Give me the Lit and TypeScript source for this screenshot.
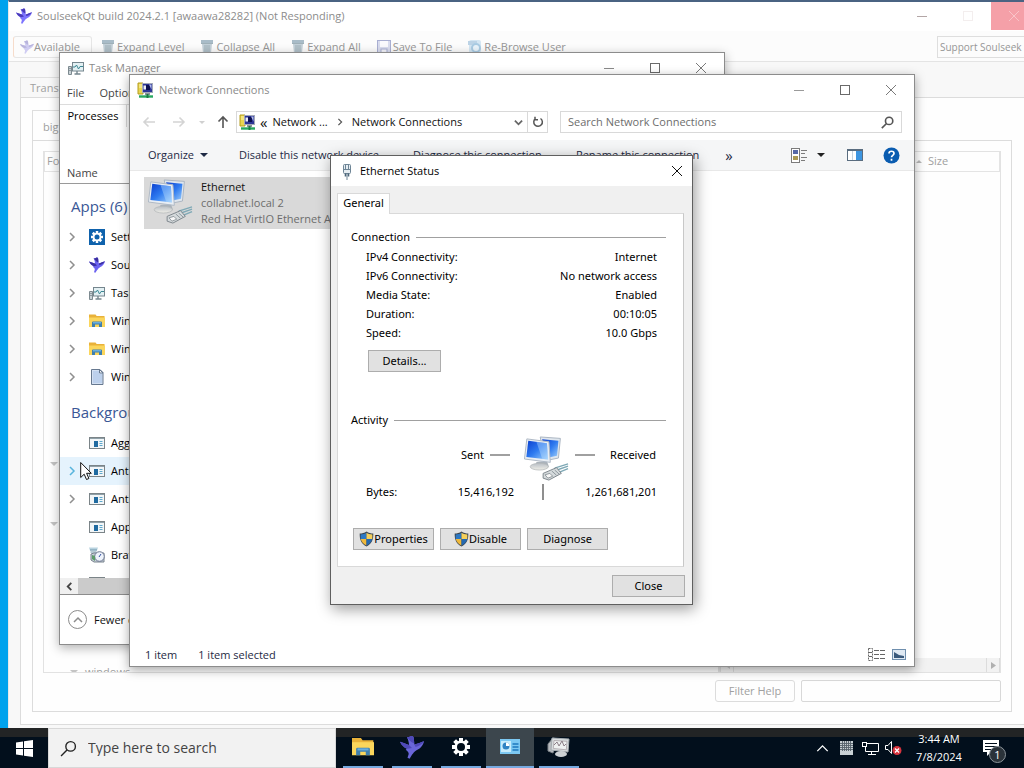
import { LitElement, html, svg, css, nothing } from "lit";
import { customElement } from "lit/decorators.js";

/* ---------- shared styles ---------- */

const base = css`
  :host {
    display: block;
    box-sizing: border-box;
    font-family: "Open Sans", "Noto Sans", sans-serif;
    font-size: 11px;
    line-height: 16px;
    color: #1a1a1a;
  }
  * { box-sizing: border-box; }
  button, input {
    font: inherit;
    color: inherit;
    margin: 0;
    padding: 0;
    border: 0;
    border-radius: 0;
    background: none;
    outline: none;
  }
  button { display: flex; align-items: center; justify-content: center; white-space: nowrap; }
  svg { display: block; flex: none; }
  ul, dl, dd, h2, p { margin: 0; padding: 0; font: inherit; }
  li { list-style: none; }
`;

const frame = css`
  .titlebar { display: flex; align-items: center; height: 30px; flex: none; background: #fff; }
  .titlebar .name { flex: 1; margin-left: 5px; white-space: nowrap; }
  .caption { width: 46px; height: 30px; }
`;

/* ---------- icons ---------- */

const caption = (kind: "min" | "max" | "close", color: string) => html`
  <svg width="12" height="12" viewBox="0 0 12 12" fill="none" stroke=${color} stroke-width="1">
    ${kind === "min" ? svg`<path d="M1 6.5h10"/>` : nothing}
    ${kind === "max" ? svg`<rect x="1.5" y="1.5" width="9" height="9"/>` : nothing}
    ${kind === "close" ? svg`<path d="M1 1l10 10M11 1L1 11"/>` : nothing}
  </svg>`;

const bird = (size: number, a = "#4a3bb8", b = "#7d74ff") => html`
  <svg width=${size} height=${size} viewBox="0 0 16 16">
    <path d="M0 4.500C2 5 4 6 6 6.600C6 5.400 5.600 4 5.200 2.600L4.600 1.600L6.400 1.200C7.400 0.200 9 0.500 9.200 2L9.600 6.400C12 6 14 4.600 16 4.200C15.600 6.600 13.600 9.200 11 10.200C9.600 11 9 12 8 13.200L6.400 15.800L5 15.200L5.800 12.600C5.800 11.400 5 10.800 3.800 9.800L4.600 9.200C2.600 8.400 1 6.800 0 4.500Z" fill=${b}/>
    <path d="M4.600 1.600L6.400 1.200C7.400 0.200 9 0.500 9.200 2L9.500 5.600L7.500 4.600ZM0 4.500C2 5 4 6 6 6.600L8 8.600L5 9.200C3 8.400 1 6.800 0 4.500ZM9.600 6.400C12 6 14 4.600 16 4.200C15.400 5.600 13 7.400 10.400 8Z" fill=${a}/>
  </svg>`;

const bin = html`
  <svg width="14" height="15" viewBox="0 0 14 15">
    <path d="M1 1h12v3H1z" fill="#a9bcc8"/><path d="M2 5h10l-1 9H3z" fill="#c3d0d8"/>
    <path d="M1 4.500h12M5 6v7M7 6v7M9 6v7" stroke="#9fb0b8"/>
  </svg>`;

const floppy = html`
  <svg width="14" height="14" viewBox="0 0 14 14">
    <rect x=".5" y=".5" width="13" height="13" fill="#d9dcee" stroke="#a9afd2"/>
    <rect x="3" y="1" width="8" height="6" fill="#fafafd"/><rect x="4" y="9" width="6" height="4" fill="#f4f4fa" stroke="#a9afd2"/>
  </svg>`;

const refreshBlue = html`
  <svg width="14" height="14" viewBox="0 0 14 14">
    <rect width="12" height="13" x="1" rx="2" fill="#d4e6f3"/><path d="M0 1h9v4H0z" fill="#bcd3e6"/>
    <circle cx="8" cy="8" r="4" fill="#eaf4fb" stroke="#a9cbe3" stroke-width="2"/>
  </svg>`;

const monitorGraph = (size = 16) => html`
  <svg width=${size} height=${size} viewBox="0 0 16 16">
    <path d="M.5 6.500h3v8h-3z" fill="#c9d2d6" stroke="#7d8a90"/><path d="M1.500 8.500h1M1.500 10.500h1" stroke="#54636a"/>
    <rect x="4.500" y="2.500" width="11" height="8.500" fill="#e3f0f3" stroke="#75868e"/>
    <path d="M5 7h2l1.500-2 2 4 1.500-2.500h3" fill="none" stroke="#3d8894"/>
    <path d="M9 11v2.500M6.500 14h6" stroke="#75868e" stroke-width="1.400"/>
  </svg>`;

const networkFolder = html`
  <svg width="17" height="17" viewBox="0 0 17 17">
    <path d="M1 1h5v11H1z" fill="#e9d650" stroke="#b59c1e"/><path d="M2 3h3M2 5h3" stroke="#fff6b0"/>
    <rect x="5.500" y="1.500" width="10" height="9" fill="#2c3596" stroke="#a3a9b8"/>
    <path d="M9 3h4v5H9z" fill="#0b1050"/><path d="M12 2.500h2.500v5z" fill="#b5beee"/>
    <path d="M6.500 3.500h2.500v4h-2.500z" fill="#e8ecf8"/>
    <path d="M8 11h5v2H8z" fill="#8d959c"/><path d="M2 14.500h14" stroke="#27a85f" stroke-width="2.400"/><path d="M10.500 12v4" stroke="#1b7a43" stroke-width="2"/>
  </svg>`;

const computers = (w: number) => html`
  <svg width=${w} height=${w} viewBox="0 0 48 48">
    <defs>
      <linearGradient id="scr" x1="0" y1="0" x2="1" y2="1"><stop offset="0" stop-color="#0a3fd0"/><stop offset=".5" stop-color="#2f7bf0"/><stop offset="1" stop-color="#9fd0fb"/></linearGradient>
      <linearGradient id="stand" x1="0" y1="0" x2="0" y2="1"><stop offset="0" stop-color="#b9bfc6"/><stop offset="1" stop-color="#f0efe8"/></linearGradient>
    </defs>
    <path d="M18 1L39 2.500L37 23L22 26Z" fill="#dfe6ee" stroke="#a9b4c0"/><path d="M20 3.500L37 5L35.500 20.500L24 23Z" fill="url(#scr)"/>
    <path d="M14 27L25 26L27 32L13 32Z" fill="#aab2ba"/><ellipse cx="17" cy="32" rx="9.500" ry="3.500" fill="url(#stand)" stroke="#b5b8ba" stroke-width=".8"/>
    <path d="M4 3L27 6L28.500 27.500L1.500 24Z" fill="#e9eef4" stroke="#aeb8c4"/><path d="M5.500 5L25 7.500L26 24.500L3.500 22Z" fill="url(#scr)"/>
    <path d="M14 6.100L25 7.500L26 24.500L20 23.800Z" fill="#bfe0ff" opacity=".4"/>
    <path d="M33 33.500L47 29M34 36L47 31.500M35 39L47 34" stroke="#7fa9b6" stroke-width="1.400" fill="none"/>
    <path d="M21 39L35 33L40 39L27 46L21 44Z" fill="#d5dadc" stroke="#7c858b"/>
    <path d="M23 40.500L28 39L31 42L26 44Z" fill="#f7f7f7" stroke="#7c858b" stroke-width=".8"/><path d="M30 36.500L35 41M33 35.500L38 40" stroke="#8c979c"/>
  </svg>`;

const plug = html`
  <svg width="12" height="17" viewBox="0 0 12 17">
    <rect x="2.500" y="1.500" width="7" height="9" rx="1" fill="#e6edf2" stroke="#6e8596"/>
    <path d="M4.500 1v5M7.500 1v5M3 6.500h6" stroke="#6e8596"/>
    <path d="M4.500 10.500v3M7.500 10.500v3" stroke="#4a6478" stroke-width="1.600"/><path d="M6 11v6" stroke="#6e8596"/>
  </svg>`;

const gear = (size: number, color: string, hole: string) => html`
  <svg width=${size} height=${size} viewBox="0 0 20 20">
    ${[0, 45, 90, 135].map(a => svg`<rect x="8" y="1" width="4" height="18" fill=${color} transform="rotate(${a} 10 10)"/>`)}
    <circle cx="10" cy="10" r="6.500" fill=${color}/><circle cx="10" cy="10" r="4" fill=${hole}/>
  </svg>`;

const gearTile = html`
  <svg width="16" height="16" viewBox="0 0 16 16">
    <rect width="16" height="16" fill="#0f62ac"/>
    ${[0, 45, 90, 135].map(a => svg`<rect x="6.750" y="2" width="2.500" height="12" fill="#fff" transform="rotate(${a} 8 8)"/>`)}
    <circle cx="8" cy="8" r="4.300" fill="#fff"/><circle cx="8" cy="8" r="2.500" fill="#0f62ac"/>
  </svg>`;

const folder = (w: number) => html`
  <svg width=${w} height=${w} viewBox="0 0 16 16">
    <path d="M0 1.500h6.500l1.200 1.500H15.500v10.500H0z" fill="#e9b23a"/><path d="M0 4.500h16v9.500H0z" fill="#fbd65c"/>
    <path d="M3 14V9.500a1 1 0 0 1 1-1h8a1 1 0 0 1 1 1V14h-3v-2.500H6V14z" fill="#3f7fae"/><path d="M4 9h8v1.500H4z" fill="#69aede"/>
  </svg>`;

const page = html`
  <svg width="16" height="16" viewBox="0 0 16 16">
    <path d="M2.500.5h8.500l3 3v12h-11.500z" fill="#d3e0f2" stroke="#66788f"/><path d="M4 2h6v3h3v9H4z" fill="#bcd0ec"/><path d="M10.500.5v3.500h3.500z" fill="#f5f8fc" stroke="#66788f"/>
  </svg>`;

const exe = html`
  <svg width="16" height="16" viewBox="0 0 16 16">
    <rect x=".5" y="2.500" width="15" height="11" fill="#f2f6f8" stroke="#7b8488"/><path d="M1 3.500h14" stroke="#8fa0a8"/>
    <path d="M5 6h4v6H5z" fill="#1f6aa0"/><path d="M10.500 6.500h3M10.500 8.500h3M10.500 10.500h3" stroke="#5fa8cc"/>
  </svg>`;

const installer = html`
  <svg width="16" height="16" viewBox="0 0 16 16">
    <path d="M0 .5h9l-1 3H1z" fill="#b9d3e0"/><path d="M1 3h7M1.500 5h6" stroke="#6f96ab"/>
    <path d="M2 7l3-1 10 0v9H5l-3-2z" fill="#c7cfd8" stroke="#78838e"/><circle cx="10.500" cy="9.500" r="4.800" fill="#eef3fb" stroke="#6c7790"/>
    <path d="M10 10l2-3" stroke="#3450a0"/><path d="M3 8l3 1v5l-3-2z" fill="#5d9c6b"/>
  </svg>`;

const chevron = (dir: "right" | "down" | "up" | "left", color: string, w = 10, sw = 1.5) => {
  const d = { right: "M3 1l4 4-4 4", down: "M1 3l4 4 4-4", up: "M1 7l4-4 4 4", left: "M7 1L3 5l4 4" }[dir];
  return html`<svg width=${w} height=${w} viewBox="0 0 10 10" fill="none" stroke=${color} stroke-width=${sw}><path d=${d}/></svg>`;
};

const arrow = (dir: "left" | "right" | "up", color: string) => {
  const r = { left: 0, right: 180, up: 90 }[dir];
  return html`<svg width="14" height="14" viewBox="0 0 14 14" fill="none" stroke=${color} stroke-width="1.600"><path d="M13 7H2M6.500 2.500L2 7l4.500 4.500" transform="rotate(${r} 7 7)"/></svg>`;
};

const triangle = (color: string, w = 8, h = 4) => html`
  <svg width=${w} height=${h} viewBox="0 0 8 4" preserveAspectRatio="none"><path d="M0 0h8L4 4z" fill=${color}/></svg>`;

const lens = (size: number, color: string, sw: number) => html`
  <svg width=${size} height=${size} viewBox="0 0 16 16" fill="none" stroke=${color} stroke-width=${sw}>
    <circle cx="10" cy="6" r="4.500"/><path d="M6.800 9.200L1 15"/>
  </svg>`;

const shield = html`
  <svg width="15" height="16" viewBox="0 0 15 16">
    <path d="M7.500.5C9.500 2 12 2.500 14.300 2.500C14.500 9 12.500 13 7.500 15.500C2.500 13 .5 9 .7 2.500C3 2.500 5.500 2 7.500.5Z" fill="#3c4650"/>
    <path d="M7.500 1.800V8H1.800C1.600 6.500 1.600 5 1.700 3.500C4 3.500 6 2.900 7.500 1.800Z" fill="#2c78c4"/>
    <path d="M7.500 1.800V8h5.700c.2-1.500.2-3 .1-4.500C11 3.500 9 2.900 7.500 1.800Z" fill="#f6d05a"/>
    <path d="M7.500 8H1.800c.6 3 2.500 5 5.700 6.500Z" fill="#f0b93a"/><path d="M7.500 8h5.700c-.6 3-2.500 5-5.700 6.500Z" fill="#2569b0"/>
  </svg>`;

/* ---------- SoulseekQt ---------- */

@customElement("soulseek-window")
export class SoulseekWindow extends LitElement {
  static styles = [base, frame, css`
    :host { display: flex; flex-direction: column; background: #fcfcfc; color: #a0a0a0; border-top: 2px solid #4a6382; border-left: 1px solid #e8e8e8; overflow: hidden; }
    .titlebar { height: 29px; padding: 0 0 1px 7px; }
    .titlebar .name { color: #8c8c8c; }
    .caption { height: 28px; align-self: flex-start; }
    .caption.close { background: #f5a0a8; }
    .toolbar { display: flex; align-items: center; height: 31px; padding: 1px 0 0 4px; border-bottom: 1px solid #e4e4e4; flex: none; color: #969696; }
    .toolbar button { gap: 2px; height: 22px; margin-right: 16px; }
    .toolbar .status { gap: 0; width: 79px; justify-content: flex-start; padding-left: 6px; border: 1px solid #e6e6e6; border-left-color: #f6dccb; border-radius: 3px; margin-right: 9px; }
    .toolbar .support { width: 100px; justify-content: flex-start; padding-left: 2px; border: 1px solid #dedede; margin: 0 0 0 auto; font-size: 10px; }
    .body { flex: 1; min-height: 0; padding: 15px 0 3px 11px; background: #f8f8f8; display: flex; flex-direction: column; }
    .tab { width: 80px; height: 20px; padding-left: 9px; border: 1px solid #e0e0e0; border-bottom: 0; line-height: 20px; flex: none; }
    .panel { flex: 1; min-height: 0; padding: 12px 24px 12px 11px; border: 1px solid #dcdcdc; background: #fefefe; display: flex; flex-direction: column; }
    .usertab { width: 120px; height: 30px; padding: 8px 10px 0; border: 1px solid #dedede; border-bottom: 0; flex: none; }
    .inner { flex: 1; min-height: 0; padding: 10px 10px 9px 10px; border: 1px solid #dcdcdc; display: flex; flex-direction: column; gap: 7px; }
    .split { flex: 1; min-height: 0; display: flex; }
    .pane { display: flex; flex-direction: column; border: 1px solid #e2e2e2; overflow: hidden; flex: 1; min-width: 0; }
    .pane.files { flex: 0 0 282px; }
    table { width: 100%; border-collapse: collapse; table-layout: fixed; flex: none; }
    th { height: 19px; padding: 0 0 0 2px; font-weight: normal; text-align: left; border: 1px solid #e4e4e4; border-top: 0; }
    th.size { width: 86px; }
    th.size span { display: flex; align-items: center; gap: 6px; }
    th.size svg { transform: rotate(180deg); }
    .rows { flex: 1; min-height: 0; position: relative; overflow: hidden; }
    .node { position: absolute; display: flex; align-items: center; gap: 7px; left: 6px; }
    .node.deep { left: 26px; }
    .scroll { height: 14px; flex: none; display: flex; justify-content: space-between; background: #f2f2f2; }
    .scroll button { width: 14px; border: 0 solid #dcdcdc; border-width: 0 1px; }
    .scroll .next svg { transform: rotate(-90deg); }
    .scroll .prev svg { transform: rotate(90deg); }
    .filter { display: flex; justify-content: flex-end; gap: 6px; flex: none; }
    .filter button { width: 80px; height: 22px; border: 1px solid #dcdcdc; border-radius: 3px; }
    .filter input { width: 200px; height: 22px; border: 1px solid #d8d8d8; border-radius: 2px; }
  `];

  render() {
    return html`
      <div class="titlebar">
        ${bird(16)}<span class="name">SoulseekQt build 2024.2.1 [awaawa28282] (Not Responding)</span>
        <button class="caption" aria-label="Minimize">${caption("min", "#b3a6a6")}</button>
        <button class="caption" aria-label="Maximize">${caption("max", "#f3eeee")}</button>
        <button class="caption close" aria-label="Close">${caption("close", "#f9c4c8")}</button>
      </div>
      <div class="toolbar">
        <button class="status">${bird(14, "#b8b4dc", "#cfccf2")}Available</button>
        <button>${bin}Expand Level</button>
        <button>${bin}Collapse All</button>
        <button>${bin}Expand All</button>
        <button>${floppy}Save To File</button>
        <button>${refreshBlue}Re-Browse User</button>
        <button class="support">Support Soulseek</button>
      </div>
      <div class="body">
        <div class="tab">Transfers</div>
        <div class="panel">
          <div class="usertab">big</div>
          <div class="inner">
            <div class="split">
              <div class="pane">
                <table><tr><th>Folder</th></tr></table>
                <div class="rows">
                  <div class="node" style="top:290px">${triangle("#c4c4c4")}</div>
                  <div class="node" style="top:350px">${triangle("#c4c4c4")}</div>
                  <div class="node deep" style="top:492px">${triangle("#c4c4c4")}<span>windows</span></div>
                </div>
              </div>
              <div class="pane files">
                <table><tr><th>Name</th><th class="size"><span>${triangle("#b8b8b8", 6, 3)}Size</span></th></tr></table>
                <div class="rows"></div>
                <div class="scroll">
                  <button class="prev" aria-label="Scroll left">${triangle("#c8c8c8", 7, 5)}</button>
                  <button class="next" aria-label="Scroll right">${triangle("#b0b0b0", 7, 5)}</button>
                </div>
              </div>
            </div>
            <div class="filter"><button>Filter Help</button><input aria-label="Filter" /></div>
          </div>
        </div>
      </div>`;
  }
}

/* ---------- Task Manager ---------- */

@customElement("task-manager-window")
export class TaskManagerWindow extends LitElement {
  static styles = [base, frame, css`
    :host { display: flex; flex-direction: column; background: #fff; border: 1px solid #8c8c8c; box-shadow: 0 3px 10px rgba(0, 0, 0, .3); overflow: hidden; }
    .titlebar { padding-left: 8px; color: #8a8a8a; }
    .menu { display: flex; gap: 15px; padding: 2px 7px 3px; height: 22px; border-bottom: 1px solid #dcdcdc; flex: none; color: #444; }
    .tabs { height: 23px; flex: none; }
    .tabs button { width: 67px; height: 22px; border-right: 1px solid #d9d9d9; color: #000; }
    .heading { height: 56px; padding: 37px 7px 0; border-bottom: 1px solid #9a9a9a; flex: none; color: #444; }
    .list { flex: 1; min-height: 0; padding-top: 1px; overflow: hidden; display: flex; flex-direction: column; }
    h2 { height: 38px; padding: 7px 11px 0; line-height: 28px; font-size: 15px; color: #3a5796; flex: none; }
    li { display: flex; align-items: center; height: 28px; padding-left: 7px; color: #000; }
    li .mark { width: 22px; }
    li.hot { background: #e5f3fd; }
    .label { margin-left: 6px; }
    .hscroll { display: flex; height: 16px; background: #f0f0f0; flex: none; }
    .hscroll button { width: 18px; }
    .thumb { width: 400px; background: #cbcbcb; }
    .footer { display: flex; align-items: center; gap: 7px; height: 50px; padding-left: 8px; border-top: 1px solid #8c8c8c; flex: none; color: #111; }
    .round { width: 19px; height: 19px; border: 1px solid #8c8c8c; border-radius: 50%; }
  `];

  private row(icon: unknown, name: string, mark = true, hot = false) {
    return html`<li class=${hot ? "hot" : ""}>
      <span class="mark">${mark ? chevron("right", hot ? "#58b4dc" : "#8f8f8f") : nothing}</span>${icon}<span class="label">${name}</span></li>`;
  }

  render() {
    return html`
      <div class="titlebar">
        ${monitorGraph()}<span class="name">Task Manager</span>
        <button class="caption" aria-label="Minimize">${caption("min", "#8a8a8a")}</button>
        <button class="caption" aria-label="Maximize">${caption("max", "#6a6a6a")}</button>
        <button class="caption" aria-label="Close">${caption("close", "#7a7a7a")}</button>
      </div>
      <div class="menu"><span>File</span><span>Options</span></div>
      <div class="tabs"><button>Processes</button></div>
      <div class="heading">Name</div>
      <div class="list">
        <h2>Apps (6)</h2>
        <ul>
          ${this.row(gearTile, "Settings")}
          ${this.row(bird(16, "#3b2fa0", "#6b62f0"), "SoulseekQt")}
          ${this.row(monitorGraph(), "Task Manager")}
          ${this.row(folder(16), "Windows Explorer")}
          ${this.row(folder(16), "Windows Explorer")}
          ${this.row(page, "Windows")}
        </ul>
        <h2>Background processes</h2>
        <ul>
          ${this.row(exe, "Aggregator", false)}
          ${this.row(exe, "Antimalware", true, true)}
          ${this.row(exe, "Antimalware")}
          ${this.row(exe, "Application", false)}
          ${this.row(installer, "Brave", false)}
          ${this.row(exe, "COM", false)}
        </ul>
      </div>
      <div class="hscroll"><button aria-label="Scroll left">${chevron("left", "#444", 9, 2)}</button><div class="thumb"></div></div>
      <div class="footer"><button class="round" aria-label="Collapse">${chevron("up", "#8c8c8c")}</button><span>Fewer details</span></div>`;
  }
}

/* ---------- Network Connections ---------- */

@customElement("network-window")
export class NetworkWindow extends LitElement {
  static styles = [base, frame, css`
    :host { display: flex; flex-direction: column; background: #fff; border: 1px solid #8c8c8c; box-shadow: 0 3px 10px rgba(0, 0, 0, .35); }
    .titlebar { padding-left: 7px; color: #8a8a8a; }
    .nav { display: flex; align-items: center; height: 35px; padding: 0 12px 1px 11px; flex: none; }
    .nav > button { width: 16px; height: 20px; }
    .nav > .back { margin-right: 14px; }
    .nav > .next { margin-right: 11px; }
    .nav > .recent { width: 8px; margin-right: 9px; }
    .nav > .up { margin-right: 5px; }
    .address { display: flex; align-items: center; width: 312px; height: 22px; padding-left: 2px; border: 1px solid #d9d9d9; white-space: nowrap; color: #111; }
    .address .path { margin: 0 5px 0 4px; font-size: 15px; }
    .address .sep { margin: 0 8px; }
    .address .drop { margin-left: auto; width: 18px; height: 20px; }
    .address .go { width: 20px; height: 20px; border-left: 1px solid #d9d9d9; }
    .search { flex: 1; display: flex; align-items: center; height: 22px; margin-left: 12px; padding: 0 7px; border: 1px solid #d9d9d9; }
    .search input { flex: 1; min-width: 0; }
    .search input::placeholder { color: #6d6d6d; opacity: 1; }
    .commands { display: flex; align-items: center; height: 31px; padding: 0 14px 0 18px; background: #f5f6f7; border-bottom: 1px solid #e8e8e8; color: #1e2a44; flex: none; }
    .commands button { gap: 6px; margin-right: 34px; }
    .commands .organize { margin-right: 31px; }
    .commands .more { margin: 0 0 0 -8px; font-size: 15px; }
    .commands .views { margin: 0 22px 0 auto; gap: 10px; }
    .commands .pane { margin-right: 20px; }
    .commands .help { margin: 0; }
    .files { flex: 1; min-height: 0; padding: 6px 14px; }
    .tile { display: flex; gap: 8px; width: 260px; height: 52px; padding: 2px 0 0 3px; background: #d9d9d9; overflow: hidden; white-space: nowrap; color: #6d6d6d; }
    .tile strong { display: block; font-weight: normal; color: #111; }
    .status { display: flex; align-items: center; gap: 21px; height: 23px; padding: 0 8px 0 15px; color: #1e2a44; flex: none; }
    .status .icons { display: flex; gap: 7px; margin-left: auto; }
  `];

  render() {
    return html`
      <div class="titlebar">
        ${networkFolder}<span class="name">Network Connections</span>
        <button class="caption" aria-label="Minimize">${caption("min", "#9a9a9a")}</button>
        <button class="caption" aria-label="Maximize">${caption("max", "#6a6a6a")}</button>
        <button class="caption" aria-label="Close">${caption("close", "#7a7a7a")}</button>
      </div>
      <div class="nav">
        <button class="back" aria-label="Back">${arrow("left", "#d4d4d4")}</button>
        <button class="next" aria-label="Forward">${arrow("right", "#d4d4d4")}</button>
        <button class="recent" aria-label="Recent locations">${triangle("#d0d0d0", 6, 3)}</button>
        <button class="up" aria-label="Up">${arrow("up", "#555")}</button>
        <div class="address">
          ${networkFolder}<span class="path">«</span><span>Network ...</span>
          <span class="sep">${chevron("right", "#555", 8)}</span><span>Network Connections</span>
          <button class="drop" aria-label="Previous locations">${chevron("down", "#666", 9, 2)}</button>
          <button class="go" aria-label="Refresh">
            <svg width="12" height="12" viewBox="0 0 12 12" fill="none" stroke="#555" stroke-width="1.500"><path d="M8.500 2.500A4.300 4.300 0 1 1 3.500 2.600M3 .8v3h3"/></svg>
          </button>
        </div>
        <label class="search"><input placeholder="Search Network Connections" aria-label="Search Network Connections" />${lens(13, "#555", 2)}</label>
      </div>
      <div class="commands">
        <button class="organize">Organize ${triangle("#1e2a44")}</button>
        <button>Disable this network device</button>
        <button>Diagnose this connection</button>
        <button>Rename this connection</button>
        <button class="more" aria-label="More commands">»</button>
        <button class="views" aria-label="Change view">
          <svg width="16" height="15" viewBox="0 0 16 15"><rect x=".5" y=".5" width="8" height="14" fill="#fff" stroke="#7c7c7c"/><rect x="2" y="2" width="5" height="4" fill="#5669a8"/><rect x="2" y="8" width="5" height="4" fill="#ab9a55"/><path d="M10 2.500h6M10 5.500h4M10 9.500h6M10 12.500h4" stroke="#7c7c7c"/></svg>
          ${triangle("#222")}
        </button>
        <button class="pane" aria-label="Preview pane">
          <svg width="16" height="12" viewBox="0 0 16 12"><rect x=".5" y=".5" width="15" height="11" fill="#fff" stroke="#5a6d80"/><path d="M1 1.500h14" stroke="#5a6d80"/><rect x="9" y="2" width="6" height="9" fill="#3d95e0"/><path d="M5.500 2v9" stroke="#c8d4de"/></svg>
        </button>
        <button class="help" aria-label="Help">
          <svg width="17" height="17" viewBox="0 0 17 17"><circle cx="8.500" cy="8.500" r="8" fill="#0a5cb0"/><path d="M6 6.500C6 3.500 11 3.500 11 6.500C11 8.500 8.500 8.300 8.500 10.300M8.500 11.700v2" fill="none" stroke="#fff" stroke-width="1.700"/></svg>
        </button>
      </div>
      <div class="files">
        <div class="tile">${computers(46)}<div><strong>Ethernet</strong>collabnet.local 2<br />Red Hat VirtIO Ethernet Adapter</div></div>
      </div>
      <div class="status">
        <span>1 item</span><span>1 item selected</span>
        <div class="icons">
          <svg width="17" height="13" viewBox="0 0 17 13" fill="none" stroke="#666"><rect x=".5" y=".5" width="4" height="12" stroke-dasharray="2 1"/><path d="M1 4.500h3M1 8.500h3"/><path d="M6 2.500h5M12 2.500h5M6 6.500h5M12 6.500h5M6 10.500h5M12 10.500h5"/></svg>
          <svg width="14" height="13" viewBox="0 0 14 13"><rect x=".5" y="1.500" width="13" height="10" fill="#dfe9f3" stroke="#6f8fae"/><path d="M2 10V4l5 3 5 1v2z" fill="#39597c"/></svg>
        </div>
      </div>`;
  }
}

/* ---------- Ethernet Status ---------- */

@customElement("status-dialog")
export class StatusDialog extends LitElement {
  static styles = [base, frame, css`
    :host { display: flex; flex-direction: column; background: #f0f0f0; border: 1px solid #5f5f5f; box-shadow: 2px 4px 14px rgba(0, 0, 0, .4); color: #000; font-family: "Noto Sans", sans-serif; }
    .titlebar { padding-left: 10px; font-family: "Open Sans", sans-serif; }
    .titlebar .name { margin-left: 7px; }
    .caption { width: 30px; }
    .content { flex: 1; display: flex; flex-direction: column; padding: 7px 7px 7px 6px; }
    .tab { width: 53px; height: 21px; padding-bottom: 2px; background: #fff; border: 1px solid #d9d9d9; border-bottom: 0; margin-bottom: -1px; z-index: 1; flex: none; }
    .panel { flex: 1; padding: 15px 17px 16px 13px; background: #fff; border: 1px solid #d9d9d9; border-right-color: #c8c8c8; margin-right: 1px; display: flex; flex-direction: column; }
    h2 { display: flex; align-items: center; gap: 6px; height: 16px; }
    h2::after { content: ""; flex: 1; height: 1px; background: #a0a0a0; }
    .activity { margin-top: 40px; }
    dl { display: grid; grid-template-columns: auto 1fr; margin: 2px 9px 8px 15px; line-height: 19px; }
    dd { text-align: right; }
    .push { height: 22px; background: #e1e1e1; border: 1px solid #adadad; }
    .details { width: 73px; margin-left: 17px; }
    .traffic { display: grid; grid-template-columns: 124px 20px 65px 20px 1fr; align-items: center; margin: 0 10px 0 15px; }
    .bytes { display: grid; grid-template-columns: 40px 108px 57px 1fr; align-items: center; margin: 2px 9px 0 15px; }
    .num { text-align: right; }
    .dash { height: 2px; background: #a0a0a0; }
    .bar { width: 2px; height: 16px; background: #8f8f8f; margin: 0 auto; }
    .sent { text-align: right; padding-right: 6px; }
    .pic { padding: 8px 0 0 13px; }
    .actions { display: grid; grid-template-columns: 81px 81px 81px; gap: 6px; margin: auto 0 0 2px; }
    .close { width: 73px; margin: 8px 0 0 auto; flex: none; }
  `];

  private rows: [string, string][] = [
    ["IPv4 Connectivity:", "Internet"],
    ["IPv6 Connectivity:", "No network access"],
    ["Media State:", "Enabled"],
    ["Duration:", "00:10:05"],
    ["Speed:", "10.0 Gbps"],
  ];

  render() {
    return html`
      <div class="titlebar">
        ${plug}<span class="name">Ethernet Status</span>
        <button class="caption" aria-label="Close">${caption("close", "#111")}</button>
      </div>
      <div class="content">
        <button class="tab">General</button>
        <div class="panel">
          <h2>Connection</h2>
          <dl>${this.rows.map(([k, v]) => html`<dt>${k}</dt><dd>${v}</dd>`)}</dl>
          <button class="push details">Details...</button>
          <h2 class="activity">Activity</h2>
          <div class="traffic">
            <span class="sent">Sent</span><span class="dash"></span>
            <span class="pic">${computers(46)}</span>
            <span class="dash"></span><span class="num">Received</span>
          </div>
          <div class="bytes">
            <span>Bytes:</span><span class="num">15,416,192</span><span class="bar"></span><span class="num">1,261,681,201</span>
          </div>
          <div class="actions">
            <button class="push">${shield}Properties</button>
            <button class="push">${shield}Disable</button>
            <button class="push">Diagnose</button>
          </div>
        </div>
        <button class="push close">Close</button>
      </div>`;
  }
}

/* ---------- Taskbar ---------- */

@customElement("task-bar")
export class TaskBar extends LitElement {
  static styles = [base, css`
    :host { display: flex; height: 40px; background: linear-gradient(#222425 0 9px, #020f1c 9px); color: #fff; }
    .start { width: 48px; }
    .search { display: flex; align-items: center; gap: 11px; width: 288px; padding-left: 11px; background: #f2f2f2; border: 1px solid #d8d8d8; }
    .search input { flex: 1; min-width: 0; font-size: 14px; }
    .search input::placeholder { color: #444; opacity: 1; }
    .apps { display: flex; gap: 1px; margin-left: 3px; }
    .apps button { width: 48px; height: 40px; padding: 0 4px; }
    .apps button span { display: flex; align-items: center; justify-content: center; width: 40px; height: 40px; border-bottom: 2px solid #76a9e0; }
    .apps .active { background: #3c464d; padding: 0; }
    .apps .active span { width: 48px; }
    .tray { display: flex; align-items: center; margin-left: auto; }
    .tray button { height: 40px; }
    .icons { display: grid; grid-template-columns: repeat(4, 24px); align-items: center; justify-items: center; }
    .clock { width: 66px; line-height: 18px; text-align: center; }
    .notes { width: 38px; margin-right: 14px; position: relative; }
    .badge { position: absolute; left: 17px; top: 18px; width: 17px; height: 17px; border: 1px solid #8c949a; border-radius: 50%; background: #2b333a; line-height: 15px; text-align: center; }
  `];

  render() {
    return html`
      <button class="start" aria-label="Start">
        <svg width="17" height="17" viewBox="0 0 17 17" fill="#fff"><path d="M0 2.400L7 1.400V8H0zM8 1.300L17 0V8H8zM0 9h7v6.600L0 14.600zM8 9h9v8L8 15.700z"/></svg>
      </button>
      <label class="search">${lens(17, "#222", 1.3)}<input placeholder="Type here to search" aria-label="Type here to search" /></label>
      <div class="apps">
        <button aria-label="File Explorer"><span>${folder(22)}</span></button>
        <button aria-label="SoulseekQt"><span>${bird(24, "#4f49b8", "#6a66d8")}</span></button>
        <button aria-label="Settings"><span>${gear(20, "#fff", "#020f1c")}</span></button>
        <button class="active" aria-label="Network Connections"><span>
          <svg width="20" height="16" viewBox="0 0 20 16"><rect width="20" height="15" fill="#7cc8f2"/><rect x="1" y="2" width="10" height="11" fill="#c7ecfc"/><circle cx="6" cy="7" r="3.500" fill="#2f83c4"/><path d="M6 7V3.500A3.500 3.500 0 0 1 9.500 7z" fill="#fff"/><path d="M12.500 5h6M12.500 8h6M12.500 11h6" stroke="#1e78be" stroke-width="1.500"/></svg>
        </span></button>
        <button aria-label="Task Manager"><span>
          <svg width="24" height="22" viewBox="0 0 24 22"><path d="M1 8l5-6 4 1-4 14-5-2z" fill="#b9bcc0" stroke="#7e858a"/><path d="M5 2l17 1-1 13-17-2z" fill="#d9dddf" stroke="#a5abaf"/><path d="M7 4.500l13 .8-.7 8.500-13-1.300z" fill="#eef0f0" stroke="#b5b0b4"/><path d="M7 9l3-3 2 4 3-5 2 5 2-2" fill="none" stroke="#8c7f88"/><ellipse cx="14" cy="18" rx="6" ry="3" fill="#cdd1d4"/></svg>
        </span></button>
      </div>
      <div class="tray">
        <div class="icons">
          ${chevron("up", "#fff", 13, 1)}
          <svg width="13" height="14" viewBox="0 0 13 14"><rect width="13" height="14" fill="#c8d0d4"/><path d="M0 2.500h13M0 4.500h13M0 6.500h13M0 8.500h13M2.500 0v10M4.500 0v10M6.500 0v10M8.500 0v10M10.500 0v10" stroke="#57636c" stroke-width=".9"/></svg>
          <svg width="17" height="14" viewBox="0 0 17 14" fill="none" stroke="#fff"><path d="M4 2.500h12.500v8H3.500V6"/><path d="M9.500 10.500v3M6 13.500h8"/><rect x=".5" y="1.500" width="4" height="4" fill="#020f1c"/></svg>
          <svg width="18" height="16" viewBox="0 0 18 16"><path d="M.5 5.500h2.500l3.500-4v12L3 9.500H.5z" fill="none" stroke="#fff"/><circle cx="12" cy="10.500" r="4.500" fill="#d8343e"/><path d="M10 8.500l4 4M14 8.500l-4 4" stroke="#fff" stroke-width="1.300"/></svg>
        </div>
        <button class="clock">3:44 AM<br />7/8/2024</button>
        <button class="notes" aria-label="Notifications">
          <svg width="16" height="16" viewBox="0 0 16 16"><path d="M0 0h16v12H8l-4 4v-4H0z" fill="#fff"/><path d="M2 3.500h12M2 6.500h12M2 9.500h8" stroke="#020f1c"/></svg>
          <span class="badge">1</span>
        </button>
      </div>`;
  }
}

/* ---------- Desktop ---------- */

@customElement("app-root")
export class AppRoot extends LitElement {
  static styles = [base, css`
    :host { display: flex; flex-direction: column; height: 100vh; overflow: hidden; background: #00a2ed; }
    .desktop { flex: 1; min-height: 0; position: relative; overflow: hidden; }
    .desktop > * { position: absolute; }
    soulseek-window { inset: 0 -13px 0 8px; }
    task-manager-window { left: 59px; top: 52px; width: 666px; height: 593px; }
    network-window { left: 129px; top: 74px; width: 786px; height: 593px; }
    status-dialog { left: 330px; top: 155px; width: 363px; height: 450px; }
    .pointer { left: 80px; top: 461px; }
  `];

  render() {
    return html`
      <div class="desktop">
        <soulseek-window></soulseek-window>
        <task-manager-window></task-manager-window>
        <network-window></network-window>
        <status-dialog></status-dialog>
        <svg class="pointer" width="13" height="20" viewBox="0 0 13 20"><path d="M.7 1.500v15l3.500-3.300 2.300 5.300 2.400-1-2.300-5.200h4.700z" fill="#fff" stroke="#111"/></svg>
      </div>
      <task-bar></task-bar>`;
  }
}
